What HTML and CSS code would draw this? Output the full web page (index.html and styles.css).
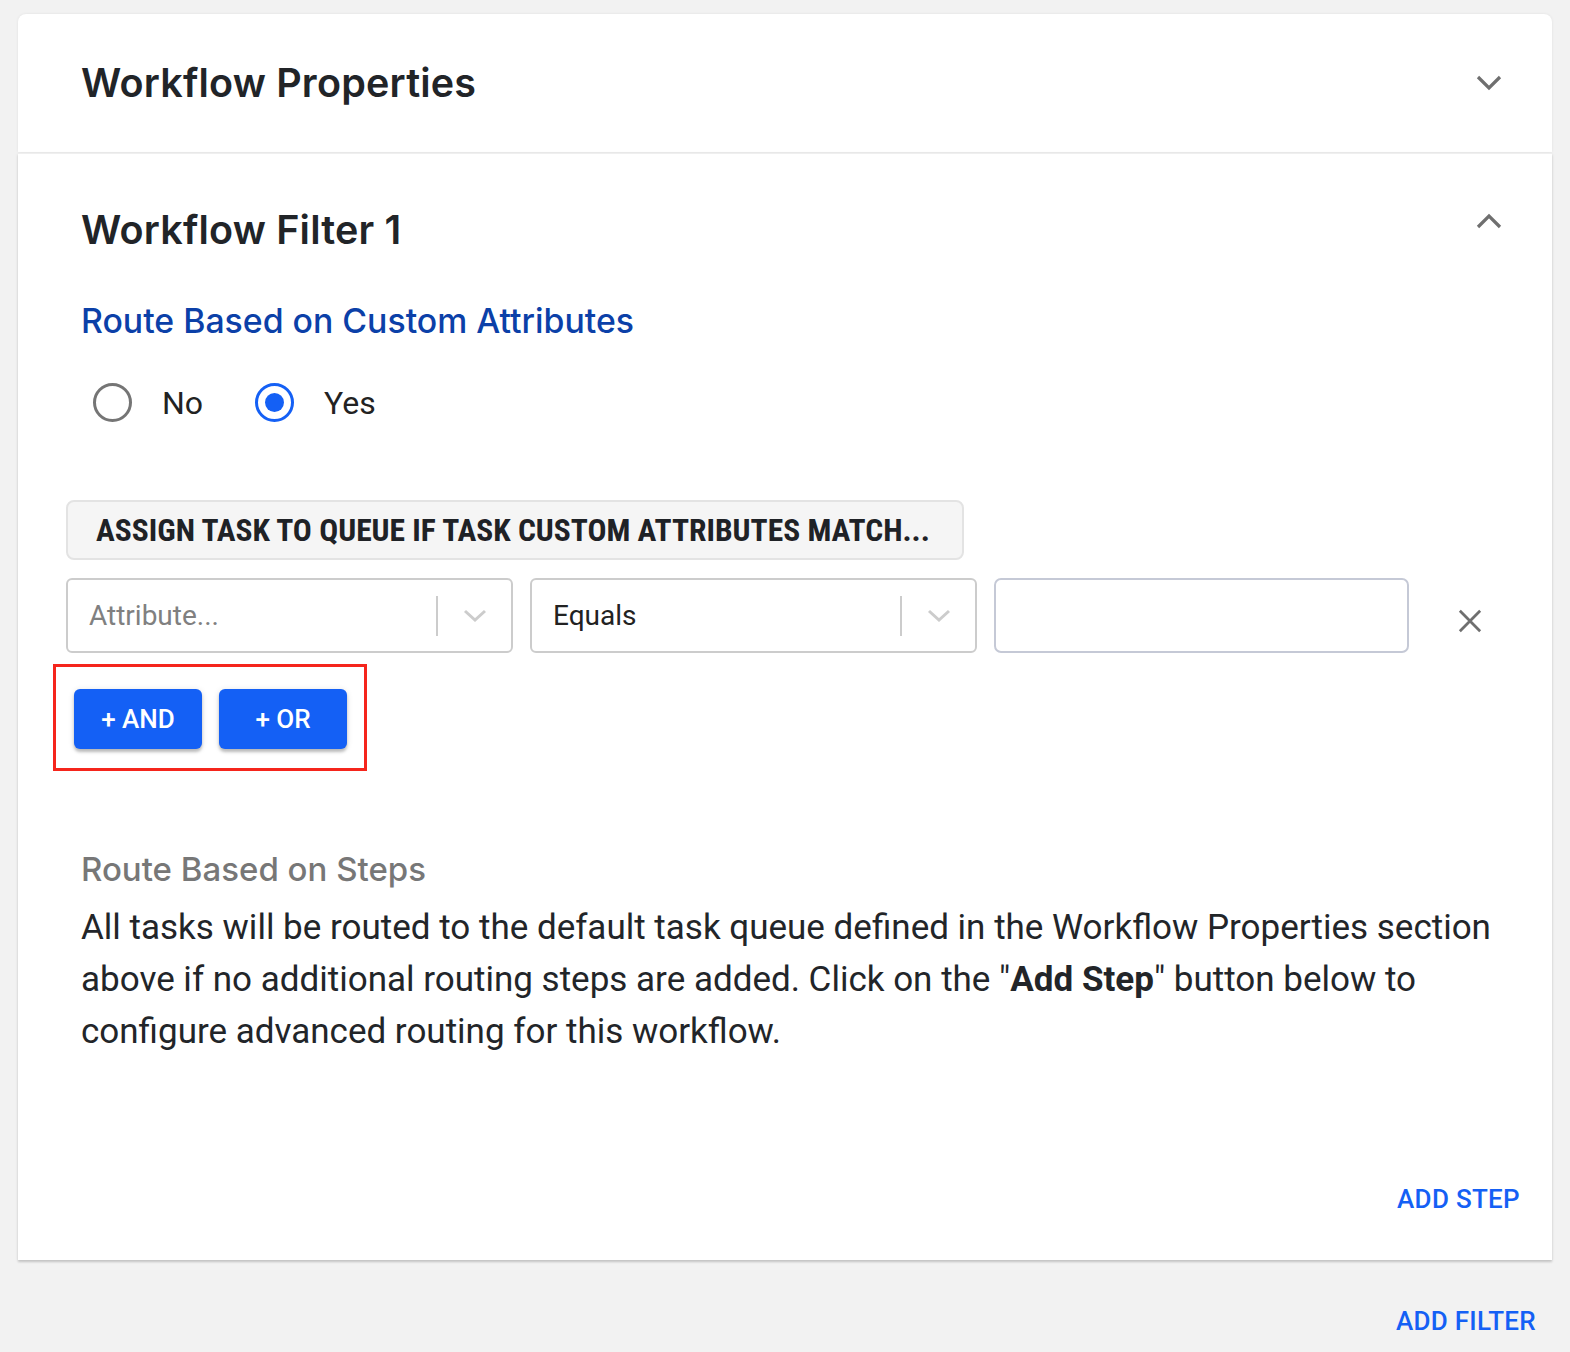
FILE: index.html
```html
<!DOCTYPE html>
<html>
<head>
<meta charset="utf-8">
<link rel="stylesheet" href="styles.css">
</head>
<body>
<div class="page">
  <section class="card card-top">
    <div class="summary summary-1">
      <h2 class="title">Workflow Properties</h2>
      <svg class="chev" width="26" height="16" viewBox="0 0 26 16"><path d="M2 2 L13 13 L24 2" fill="none" stroke="#6f6f6f" stroke-width="3.2"/></svg>
    </div>
  </section>
  <section class="card card-main">
    <div class="summary summary-2">
      <h2 class="title">Workflow Filter 1</h2>
      <svg class="chev" width="26" height="16" viewBox="0 0 26 16"><path d="M2 14 L13 3 L24 14" fill="none" stroke="#6f6f6f" stroke-width="3.2"/></svg>
    </div>
    <div class="details">
      <h3 class="sub blue">Route Based on Custom Attributes</h3>
      <div class="radios">
        <label class="radio"><span class="circle"></span><span class="rlabel">No</span></label>
        <label class="radio checked"><span class="circle"><span class="dot"></span></span><span class="rlabel">Yes</span></label>
      </div>
      <div class="assign">ASSIGN TASK TO QUEUE IF TASK CUSTOM ATTRIBUTES MATCH...</div>
      <div class="cond-row">
        <div class="select">
          <span class="sel-text placeholder">Attribute...</span>
          <span class="sep"></span>
          <svg class="sel-chev" width="24" height="14" viewBox="0 0 24 14"><path d="M2 2 L12 11 L22 2" fill="none" stroke="#cccccc" stroke-width="3"/></svg>
        </div>
        <div class="select">
          <span class="sel-text">Equals</span>
          <span class="sep"></span>
          <svg class="sel-chev" width="24" height="14" viewBox="0 0 24 14"><path d="M2 2 L12 11 L22 2" fill="none" stroke="#cccccc" stroke-width="3"/></svg>
        </div>
        <div class="text-input"></div>
        <svg class="close" width="24" height="24" viewBox="0 0 26 26"><path d="M2 2 L24 24 M24 2 L2 24" fill="none" stroke="#6f6f6f" stroke-width="3"/></svg>
      </div>
      <div class="btn-frame">
        <button class="btn">+ AND</button>
        <button class="btn">+ OR</button>
      </div>
      <h3 class="sub gray">Route Based on Steps</h3>
      <p class="desc">All tasks will be routed to the default task queue defined in the Workflow Properties section above if no additional routing steps are added. Click on the "<b>Add Step</b>" button below to configure advanced routing for this workflow.</p>
      <div class="actions"><span class="link">ADD STEP</span></div>
    </div>
  </section>
  <div class="footer-actions"><span class="link">ADD FILTER</span></div>
</div>
</body>
</html>
```

FILE: styles.css
```css
* { box-sizing: border-box; }
html, body { margin: 0; padding: 0; }
body {
  background: #f2f2f2;
  font-family: Roboto, "Liberation Sans", sans-serif;
  color: #222529;
  width: 1570px;
  height: 1352px;
  overflow: hidden;
}
.page { padding: 14px 18px 0 18px; }
.card { background: #ffffff; }
.card-top {
  border-radius: 8px 8px 0 0;
  box-shadow: 0 0 3px rgba(0,0,0,0.08);
}
.card-main {
  border-top: 1px solid #efefef;
  margin-top: 1px;
  box-shadow: 0 2px 2px rgba(0,0,0,0.16), 0 1px 4px rgba(0,0,0,0.06);
}
.summary {
  display: flex;
  align-items: center;
  justify-content: space-between;
  padding: 0 50px 0 63px;
}
.summary-1 { height: 138px; }
.summary-2 { height: 134px; }
.title {
  margin: 0;
  font-family: Inter, "Noto Sans", sans-serif;
  font-weight: 600;
  font-size: 39.5px;
  letter-spacing: 0.2px;
  color: #212428;
}
.summary-2 .title { margin-top: 18px; }
.details { padding: 0 32px 46px 48px; }
.sub {
  margin: 0;
  font-family: Inter, "Noto Sans", sans-serif;
  font-weight: 500;
  font-size: 33.8px;
  padding-left: 15px;
}
.blue { color: #0b40a8; margin-top: 12px; }
.gray { color: #777777; margin-top: 78px; font-size: 33px; }
.radios {
  display: flex;
  gap: 52px;
  margin: 42px 0 0 27px;
}
.radio { display: flex; align-items: center; gap: 30px; }
.circle {
  width: 39px; height: 39px;
  border: 3.5px solid #757575;
  border-radius: 50%;
  display: flex; align-items: center; justify-content: center;
}
.checked .circle { border-color: #1460f5; }
.dot { width: 19px; height: 19px; border-radius: 50%; background: #1460f5; }
.rlabel { font-size: 32px; color: #222; }
.assign {
  margin-top: 78px;
  width: 898px;
  height: 60px;
  background: #f5f5f5;
  border: 2px solid #e3e3e3;
  border-radius: 8px;
  display: flex; align-items: center;
  padding-left: 28px;
  font-family: "Roboto Condensed", "Liberation Sans Narrow", Roboto, sans-serif;
  font-weight: 700;
  font-size: 31.5px;
  letter-spacing: 0;
  color: #1f2226;
}
.cond-row {
  display: flex;
  align-items: center;
  margin-top: 18px;
  gap: 17px;
}
.select {
  width: 447px; height: 75px;
  border: 2px solid #cccccc;
  border-radius: 6px;
  display: flex; align-items: center;
  padding-left: 21px;
}
.sel-text { flex: 1; font-size: 28px; color: #222; }
.placeholder { color: #808080; }
.sep { width: 2px; height: 40px; background: #cccccc; }
.sel-chev { margin: 0 24px 0 25px; }
.text-input {
  width: 415px; height: 75px;
  border: 2px solid #c5c9d6;
  border-radius: 7px;
}
.close { margin-left: 32px; margin-top: 10px; }
.btn-frame {
  margin-top: 11px;
  margin-left: -13px;
  width: 314px;
  height: 107px;
  border: 3px solid #f5251c;
  display: flex; align-items: center;
  gap: 17px;
  padding-left: 18px;
}
.btn {
  width: 128px; height: 60px;
  background: #1460f5;
  color: #ffffff;
  border: none;
  border-radius: 6px;
  font-family: Roboto, sans-serif;
  font-weight: 500;
  font-size: 26px;
  box-shadow: 0 3px 3px rgba(0,0,0,0.22), 0 1px 6px rgba(0,0,0,0.12);
  margin-top: 2px;
}
.desc {
  margin: 13px 0 0 15px;
  font-size: 35px;
  line-height: 52px;
  color: #222529;
}
.desc b { font-weight: 700; }
.actions { display: flex; justify-content: flex-end; margin-top: 126px; }
.link {
  font-family: Roboto, sans-serif;
  font-weight: 500;
  font-size: 26px;
  color: #1460f5;
  letter-spacing: 0.3px;
}
.footer-actions { display: flex; justify-content: flex-end; padding: 46px 16px 0 0; }
```
